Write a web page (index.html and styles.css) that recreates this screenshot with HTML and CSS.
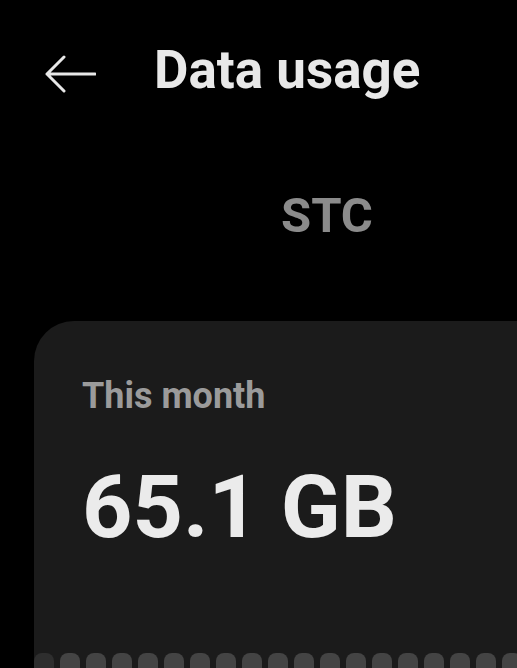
FILE: index.html
```html
<!DOCTYPE html>
<html lang="en">
<head>
    <meta charset="UTF-8">
    <meta name="viewport" content="width=device-width, initial-scale=1.0">
    <title>Data usage</title>
    <link rel="stylesheet" href="styles.css">
</head>
<body>

<header class="top-bar">
    <button class="back" aria-label="Back">
        <svg width="52" height="38" viewBox="0 0 52 38">
            <path d="M51 19 H3 M20 2 L3 19 L20 36" fill="none" stroke="#e8e8e8" stroke-width="3" stroke-linecap="round" stroke-linejoin="round"/>
        </svg>
    </button>
    <h1 class="title">Data usage</h1>
</header>

<div class="sim-tabs">
    <span class="sim-tab">STC</span>
</div>

<section class="card">
    <p class="period">This month</p>
    <p class="amount">65.1 GB</p>
    <div class="bars">
        <span class="bar dim"></span>
        <span class="bar"></span>
        <span class="bar"></span>
        <span class="bar"></span>
        <span class="bar"></span>
        <span class="bar"></span>
        <span class="bar"></span>
        <span class="bar"></span>
        <span class="bar"></span>
        <span class="bar"></span>
        <span class="bar"></span>
        <span class="bar"></span>
        <span class="bar"></span>
        <span class="bar"></span>
        <span class="bar"></span>
        <span class="bar"></span>
        <span class="bar"></span>
        <span class="bar"></span>
        <span class="bar"></span>
    </div>
</section>

</body>
</html>
```

FILE: styles.css
```css
body {
    margin: 0;
    background-color: #000000; /* Dark theme */
    font-family: Roboto, "Noto Sans", sans-serif;
    height: 668px;
    overflow: hidden;
}

.top-bar {
    display: flex;
    align-items: flex-start;
    padding: 44px 0 0 44px;
}

.back {
    display: flex;
    padding: 0;
    margin: 11px 58px 0 0;
    background: transparent;
    border: none;
}

.title {
    margin: 0;
    color: #e8e8e8;
    font-size: 53px;
    font-weight: 700;
    line-height: 53px;
}

.sim-tabs {
    padding: 94px 0 0 281px;
}

.sim-tab {
    display: block;
    color: #8b8b8b;
    font-size: 49px;
    font-weight: 700;
    line-height: 49px;
}

.card {
    box-sizing: border-box;
    height: 347px;
    margin: 81px 0 0 34px;
    padding: 57px 0 0 48px;
    background-color: #1b1b1b;
    border-radius: 40px 0 0 0;
    overflow: hidden;
}

.period {
    margin: 0;
    color: #9b9b9b;
    font-size: 36px;
    font-weight: 700;
    line-height: 36px;
}

.amount {
    margin: 49px 0 0 0;
    color: #ebebeb;
    font-size: 88px;
    font-weight: 700;
    line-height: 88px;
}

.bars {
    display: flex;
    gap: 6px;
    margin: 102px 0 0 -48px;
}

.bar {
    flex: none;
    width: 20px;
    height: 15px;
    background-color: #444444;
    border-radius: 8px 8px 0 0;
}

.bar.dim {
    background-color: #2e2e2e;
}
```
